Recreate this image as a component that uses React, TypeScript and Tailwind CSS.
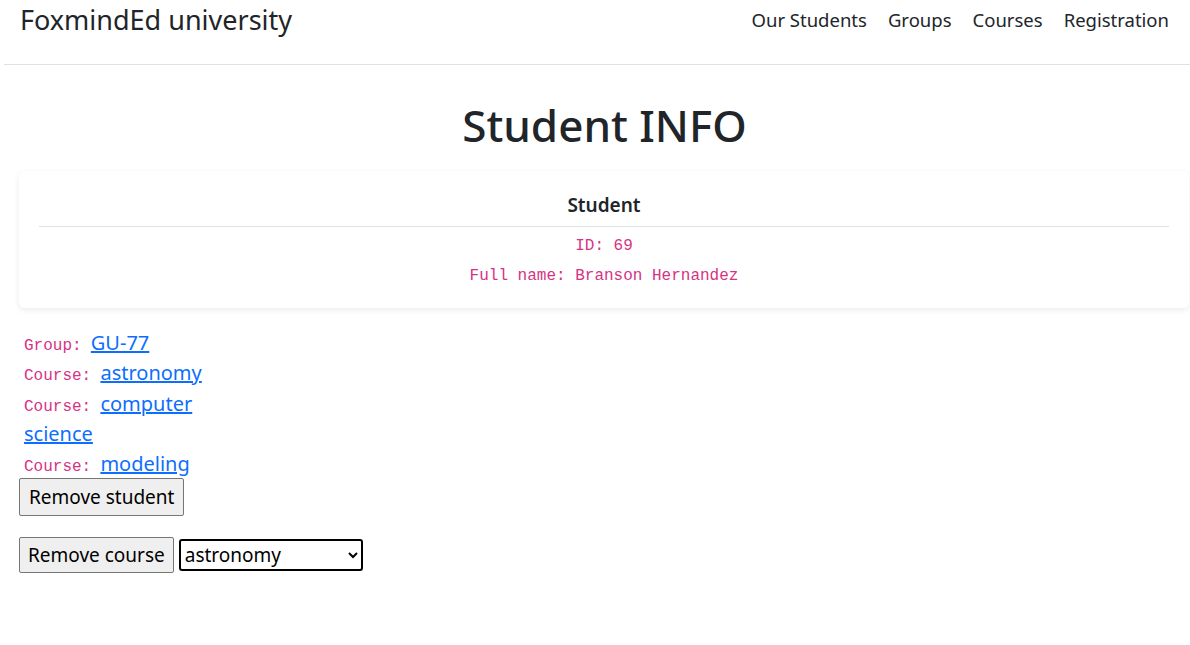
import React from "react";

const sans = "font-['Segoe_UI','Noto_Sans',sans-serif]";
const mono = "font-['Liberation_Mono',monospace]";

export default function App() {
  return (
    <div className={`${sans} text-[20px] leading-[1.5] text-[#212529] bg-white min-h-[645px]`}>
      <nav className="ml-[4px] flex h-[65px] items-start justify-between border-b border-[#dee2e6] pl-[16px] pr-[21px]">
        <a className="mt-[1px] text-[27px] leading-[38px] text-[#212529]">FoxmindEd university</a>
        <div className="mt-[5px] flex gap-[21px] text-[18.5px] leading-[30px]">
          <a>Our Students</a>
          <a>Groups</a>
          <a>Courses</a>
          <a>Registration</a>
        </div>
      </nav>
      <h1 className="mt-[30px] pl-[19px] text-center text-[44px] font-medium leading-[60px]">Student INFO</h1>
      <div className="mx-[19px] mt-[16px] mr-[1px] rounded-[6px] bg-white px-[20px] pt-[21px] pb-[17px] text-center shadow-[0_2px_6px_rgba(0,0,0,0.08)]">
        <div className="text-[19px] font-semibold leading-[26px]">Student</div>
        <hr className="mt-[8px] mb-[4px] border-t border-[#dee2e6]" />
        <div className={`${mono} text-[16px] leading-[30px] text-[#d63384]`}>ID: 69</div>
        <div className={`${mono} text-[16px] leading-[30px] text-[#d63384]`}>Full name: Branson Hernandez</div>
      </div>
      <div className="ml-[24px] mt-[20px] w-[180px] leading-[30.3px]">
        <div>
          <code className={`${mono} mr-[4px] text-[16px] leading-none text-[#d63384]`}>Group:</code>{" "}
          <a className="text-[#0d6efd] underline">GU-77</a>
        </div>
        <div>
          <code className={`${mono} mr-[4px] text-[16px] leading-none text-[#d63384]`}>Course:</code>{" "}
          <a className="text-[#0d6efd] underline">astronomy</a>
        </div>
        <div>
          <code className={`${mono} mr-[4px] text-[16px] leading-none text-[#d63384]`}>Course:</code>{" "}
          <a className="text-[#0d6efd] underline">computer science</a>
        </div>
        <div>
          <code className={`${mono} mr-[4px] text-[16px] leading-none text-[#d63384]`}>Course:</code>{" "}
          <a className="text-[#0d6efd] underline">modeling</a>
        </div>
      </div>
      <div className="ml-[19px] -mt-[1px]">
        <button className="h-[38px] rounded-[2px] border border-[#767676] bg-[#efefef] px-[9px] text-[19px] leading-[30px] text-black">
          Remove student
        </button>
      </div>
      <div className="ml-[19px] mt-[21px] flex items-center gap-[5px]">
        <button className="h-[36px] rounded-[2px] border border-[#767676] bg-[#efefef] px-[8px] text-[19px] leading-[30px] text-black">
          Remove course
        </button>
        <select className="h-[32px] w-[184px] rounded-[3px] border-2 border-black bg-white text-[19px] leading-[26px] text-black">
          <option>astronomy</option>
          <option>computer science</option>
          <option>modeling</option>
        </select>
      </div>
    </div>
  );
}
